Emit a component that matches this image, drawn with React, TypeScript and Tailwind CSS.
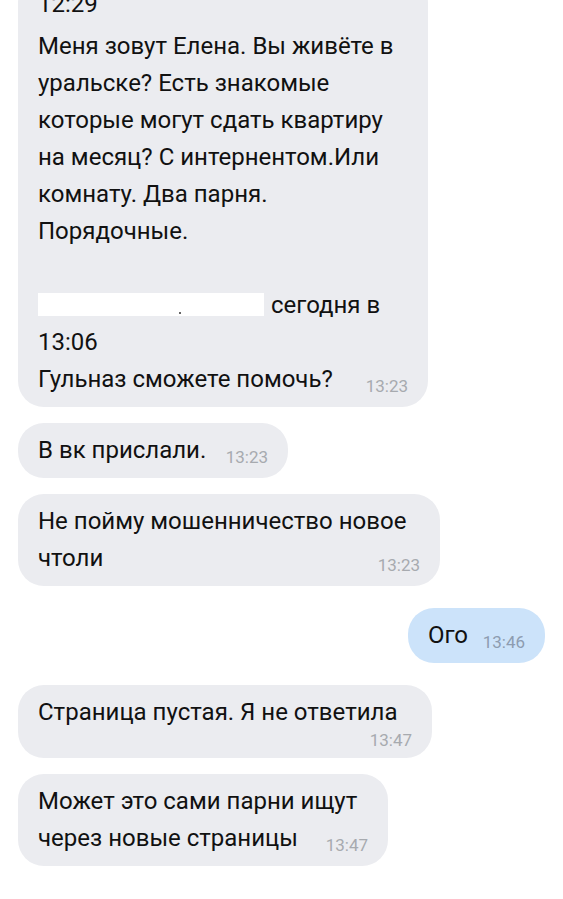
type Message = {
  id: number;
  out?: boolean;
  lines: React.ReactNode[];
  time: string;
  width: string;
  timeBelow?: boolean;
  newSender?: boolean;
};

const messages: Message[] = [
  {
    id: 2,
    lines: ["В вк прислали."],
    time: "13:23",
    width: "w-[270px]",
  },
  {
    id: 3,
    lines: ["Не пойму мошенничество новое", "чтоли"],
    time: "13:23",
    width: "w-[422px]",
  },
  {
    id: 4,
    out: true,
    lines: ["Ого"],
    time: "13:46",
    width: "w-[137px]",
    newSender: true,
  },
  {
    id: 5,
    lines: ["Страница пустая. Я не ответила"],
    time: "13:47",
    width: "w-[414px]",
    timeBelow: true,
    newSender: true,
  },
  {
    id: 6,
    lines: ["Может это сами парни ищут", "через новые страницы"],
    time: "13:47",
    width: "w-[370px]",
  },
];

function Time({ value, out }: { value: string; out?: boolean }) {
  return (
    <span
      className={`relative top-[5px] shrink-0 text-[17px] leading-none ${
        out ? "text-[#8d9cb0]" : "text-[#a7aaaf]"
      }`}
    >
      {value}
    </span>
  );
}

function Bubble({ msg }: { msg: Message }) {
  const last = msg.lines.length - 1;
  return (
    <div
      className={`${msg.width} rounded-[26px] px-[20px] py-[9px] ${
        msg.out ? "self-end bg-[#cce3fa]" : "self-start bg-[#ebecf0]"
      } ${msg.newSender ? "mt-[22px]" : "mt-[16px]"}`}
    >
      {msg.lines.map((line, i) =>
        i === last && !msg.timeBelow ? (
          <div key={i} className="flex items-baseline justify-between gap-[14px]">
            <span>{line}</span>
            <Time value={msg.time} out={msg.out} />
          </div>
        ) : (
          <div key={i}>{line}</div>
        )
      )}
      {msg.timeBelow && (
        <div className="flex h-[18px] items-start justify-end pt-[1px]">
          <span className="text-[17px] leading-none text-[#a7aaaf]">{msg.time}</span>
        </div>
      )}
    </div>
  );
}

export default function App() {
  return (
    <div className="h-[899px] overflow-hidden bg-white">
      <div
        className="flex flex-col px-[18px] text-[24px] leading-[37px] text-[#111]"
        style={{ fontFamily: "Roboto, 'Noto Sans', sans-serif" }}
      >
        {/* long forwarded message, its head runs off the top */}
        <div className="-mt-[23px] w-[410px] rounded-[26px] bg-[#ebecf0] px-[20px] py-[9px]">
          <div className="mb-[5px]">12:29</div>
          <div>Меня зовут Елена. Вы живёте в</div>
          <div>уральске? Есть знакомые</div>
          <div>которые могут сдать квартиру</div>
          <div>на месяц? С интернентом.Или</div>
          <div>комнату. Два парня.</div>
          <div>Порядочные.</div>
          <div>&nbsp;</div>
          <div className="flex items-baseline">
            <span className="relative inline-block h-[23px] w-[226px] translate-y-[3px] bg-white">
              <span className="absolute bottom-[2px] left-[141px] h-[2px] w-[2px] rounded-full bg-[#333]" />
            </span>
            <span className="ml-[7px]">сегодня в</span>
          </div>
          <div>13:06</div>
          <div className="flex items-baseline justify-between gap-[14px]">
            <span>Гульназ сможете помочь?</span>
            <Time value="13:23" />
          </div>
        </div>

        {messages.map((m) => (
          <Bubble key={m.id} msg={m} />
        ))}
      </div>
    </div>
  );
}
